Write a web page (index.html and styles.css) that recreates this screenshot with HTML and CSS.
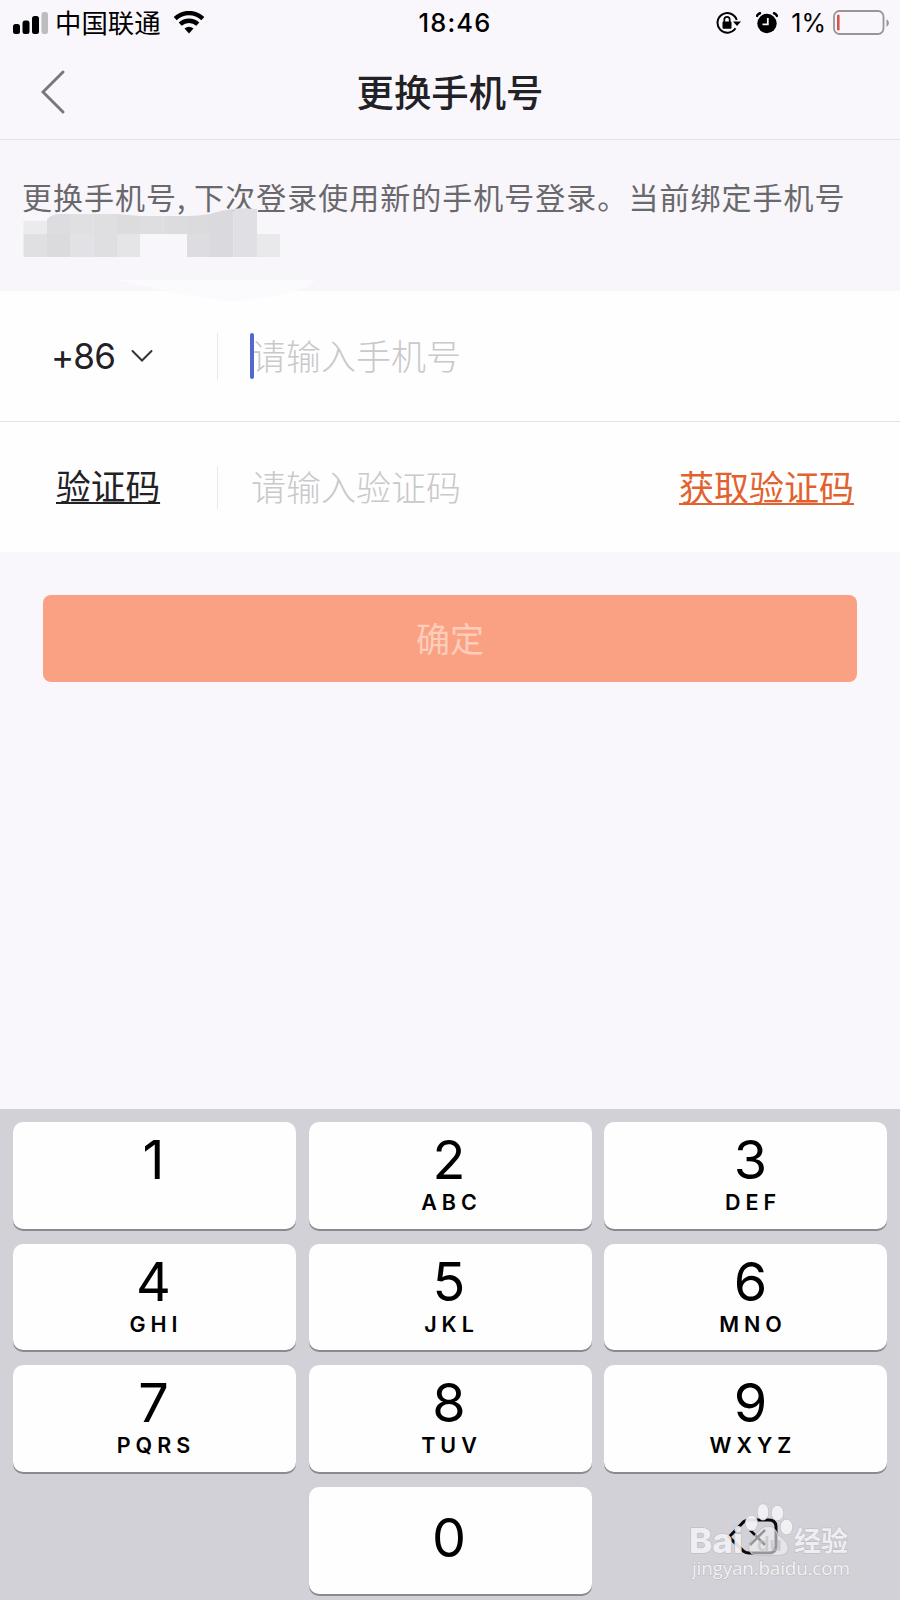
FILE: index.html
```html
<!DOCTYPE html>
<html lang="zh-CN">
<head>
    <meta charset="UTF-8">
    <title>更换手机号</title>
    <link rel="stylesheet" href="styles.css">
</head>
<body>
    <div class="screen">
        <div class="status-bar">
            <div class="status-left">
                <svg class="signal" width="36" height="22" viewBox="0 0 36 22">
                    <rect x="0" y="12" width="7" height="10" rx="2.5"/>
                    <rect x="9.5" y="8.5" width="7" height="13.5" rx="2.5"/>
                    <rect x="19" y="4" width="7" height="18" rx="2.5"/>
                    <rect x="28.5" y="0" width="6.5" height="22" rx="2.5" fill="#bdbcbf"/>
                </svg>
                <span class="carrier">中国联通</span>
                <svg class="wifi" width="32" height="23" viewBox="0 0 32 23">
                    <path d="M2.2 7.6C10 .2 22 .2 29.8 7.6M7.2 13.2C12.2 8.5 19.8 8.5 24.8 13.2" fill="none" stroke="#000" stroke-width="4.4"/>
                    <path d="M16 22.5L11.500 17.5Q16 13.8 20.5 17.5Z"/>
                </svg>
            </div>
            <span class="time">18:46</span>
            <div class="status-right">
                <svg class="lock" width="26" height="24" viewBox="0 0 26 24">
                    <path d="M19.5 17.3A9.800 9.800 0 1 1 20.7 9" fill="none" stroke="#000" stroke-width="2"/>
                    <path d="M17 10.5H25L21 15Z"/>
                    <rect x="6.5" y="10.5" width="9" height="7.2" rx="1"/>
                    <path d="M8.3 11V8.500a2.700 2.700 0 0 1 5.400 0V11" fill="none" stroke="#000" stroke-width="1.7"/>
                </svg>
                <svg class="alarm" width="22" height="22" viewBox="0 0 22 22">
                    <circle cx="11" cy="11.5" r="9.700"/>
                    <path d="M.5 5A6 6 0 0 1 5 .8M17 .8A6 6 0 0 1 21.500 5" fill="none" stroke="#000" stroke-width="2.4"/>
                    <path d="M11.8 6V12.300H6.500" fill="none" stroke="#f9f8fb" stroke-width="1.8"/>
                </svg>
                <span class="percent">1%</span>
                <svg class="battery" width="57" height="26" viewBox="0 0 57 26">
                    <rect x="1" y="1" width="49.5" height="23" rx="5.5" fill="none" stroke="#969598" stroke-width="1.8"/>
                    <rect x="4" y="4.5" width="2.6" height="16" rx="1.2" fill="#d9534c"/>
                    <path d="M53.5 9Q58.500 12.800 53.500 17Z" fill="#969598"/>
                </svg>
            </div>
        </div>

        <div class="nav">
            <svg class="back" width="24" height="44" viewBox="0 0 24 44">
                <path d="M22 2L2 22L22 42" fill="none" stroke="#77767a" stroke-width="2.9" stroke-linecap="round"/>
            </svg>
            <h1>更换手机号</h1>
        </div>

        <div class="notice">
            <p>更换手机号<span class="comma">,</span>下次登录使用新的手机号登录。当前绑定手机号</p>
            <!-- hidden phone number -->
            <svg class="mask" width="330" height="96" viewBox="0 0 330 96">
                <path d="M118 73H315L308 80Q260 95 226 94Q180 88 118 73Z" fill="#fbfafd"/>
                <path d="M23.5 14H47V27H23.500Z" fill="#ebeaed"/>
                <path d="M47 12Q52 7 60 7H70V27H47Z" fill="#dddce0"/>
                <path d="M70 7H93.500V27H70Z" fill="#e0dfe2"/>
                <path d="M93.5 7H117V27H93.500Z" fill="#dfdee1"/>
                <path d="M117 7L140 9V27H117Z" fill="#dcdbde"/>
                <path d="M140 9H163.500V27H140Z" fill="#dedde0"/>
                <path d="M163.5 9H187V27H163.500Z" fill="#dcdbde"/>
                <path d="M187 9Q198 9 210 7V27H187Z" fill="#dbdadd"/>
                <path d="M210 7Q222 3 233.500 2V50H210Z" fill="#dad9dd"/>
                <path d="M233.5 2Q240 .5 257 2V50H233.500Z" fill="#e0dfe3"/>
                <path d="M257 27H280V50H257Z" fill="#e9e8eb"/>
                <path d="M23.5 27H47V50H23.500Z" fill="#e0dfe2"/>
                <path d="M47 27H70V50H47Z" fill="#dbdadd"/>
                <path d="M70 27H93.500V50H70Z" fill="#e2e1e5"/>
                <path d="M93.5 27H117V50H93.500Z" fill="#dfdee1"/>
                <path d="M117 27H140V50H117Z" fill="#e5e4e7"/>
                <path d="M187 27H210V50H187Z" fill="#dddce0"/>
            </svg>
        </div>

        <div class="form">
            <div class="row">
                <div class="label area-code">+86
                    <svg width="22" height="14" viewBox="0 0 22 14">
                        <path d="M1.5 2L11 11.500L20.500 2" fill="none" stroke="#333236" stroke-width="2" stroke-linecap="round"/>
                    </svg>
                </div>
                <div class="divider tall"></div>
                <div class="field"><i class="caret"></i>请输入手机号</div>
            </div>
            <div class="row">
                <div class="label"><u>验证码</u></div>
                <div class="divider"></div>
                <div class="field">请输入验证码</div>
                <a class="get-code">获取验证码</a>
            </div>
        </div>

        <button class="submit">确定</button>

        <div class="keyboard">
            <div class="key"><b>1</b></div>
            <div class="key"><b>2</b><span>ABC</span></div>
            <div class="key right"><b>3</b><span>DEF</span></div>
            <div class="key"><b>4</b><span>GHI</span></div>
            <div class="key"><b>5</b><span>JKL</span></div>
            <div class="key right"><b>6</b><span>MNO</span></div>
            <div class="key"><b>7</b><span>PQRS</span></div>
            <div class="key"><b>8</b><span>TUV</span></div>
            <div class="key right"><b>9</b><span>WXYZ</span></div>
            <div class="blank"></div>
            <div class="key zero"><b>0</b></div>
            <div class="blank delete">
                <svg width="52" height="40" viewBox="0 0 52 40">
                    <path d="M2 20L17 4.500Q19 3 22 3H42Q49 3 49 10V29Q49 36 42 36H22Q19 36 17 34.500Z" fill="none" stroke="#0a0a0c" stroke-width="3"/>
                    <path d="M23 13L38 28M38 13L23 28" fill="none" stroke="#0a0a0c" stroke-width="2.6"/>
                </svg>
            </div>
        </div>

        <!-- watermark -->
        <div class="watermark">
            <svg width="170" height="90" viewBox="0 0 170 90">
                <g class="wm-fill">
                    <ellipse cx="83" cy="22" rx="5.5" ry="8"/>
                    <ellipse cx="97.5" cy="23" rx="6" ry="7.5"/>
                    <ellipse cx="71.5" cy="33" rx="6" ry="7.5"/>
                    <ellipse cx="106.5" cy="37" rx="6" ry="7.5"/>
                    <path class="wm-pad" d="M80 40Q85 35 92 37Q96 39 98 45Q108 52 108 58Q107 65 100 65H77Q69 65 69 57Q70 50 80 40Z"/>
                </g>
                <text class="wm-logo" x="9" y="63" textLength="54" lengthAdjust="spacingAndGlyphs">Bai</text>
                <text class="wm-du" x="77" y="61">du</text>
                <text class="wm-cn" x="114" y="61">经验</text>
                <text class="wm-url" x="12" y="85" textLength="158">jingyan.baidu.com</text>
            </svg>
        </div>
    </div>
</body>
</html>
```
FILE: styles.css
```css
* {
    box-sizing: border-box;
}

body {
    margin: 0;
    font-family: Inter, "Noto Sans CJK SC", sans-serif;
    background-color: #f9f7fb;
    color: #222126;
}

.screen {
    position: relative;
    display: flex;
    flex-direction: column;
    width: 900px;
    height: 1600px;
    overflow: hidden;
}

/* Status bar */
.status-bar {
    display: grid;
    grid-template-columns: 1fr auto 1fr;
    align-items: center;
    height: 45px;
    padding: 0 10px 0 13px;
    color: #000;
}

.status-left,
.status-right {
    display: flex;
    align-items: center;
}

.status-right {
    justify-content: flex-end;
}

.carrier {
    margin: 0 12px 0 6px;
    font-family: "Noto Sans CJK SC", sans-serif;
    font-size: 26.4px;
    line-height: 43px;
    padding-bottom: 2px;
}

.time {
    margin-left: 7px;
    font-size: 25.5px;
    font-weight: 500;
    letter-spacing: 1.2px;
}

.alarm {
    margin: 0 13px 0 14px;
}

.percent {
    margin-right: 7px;
    font-size: 25px;
}

/* Header */
.nav {
    display: grid;
    grid-template-columns: 1fr auto 1fr;
    align-items: center;
    height: 95px;
    padding: 0 41px;
    border-bottom: 1px solid #e2e1e4;
}

h1 {
    margin: 0;
    font-family: "Noto Sans CJK SC", sans-serif;
    font-size: 37.4px;
    font-weight: 500;
    line-height: 92px;
    padding-bottom: 2px;
}

.notice {
    position: relative;
    height: 151px;
    padding: 33px 0 0 22px;
    background-color: #f8f6fa;
    color: #69686c;
}

.notice p {
    margin: 0;
    font-family: "Noto Sans CJK SC", sans-serif;
    font-size: 30px;
    letter-spacing: 1.02px;
    line-height: 46px;
    white-space: nowrap;
}

.comma {
    display: inline-block;
    width: 17px;
}

.mask {
    position: absolute;
    left: 0;
    top: 67px;
    z-index: 1;
}

/* Form */
.form {
    background-color: #fefefe;
    font-family: "Noto Sans CJK SC", sans-serif;
    font-size: 35px;
}

.row {
    display: flex;
    align-items: center;
    height: 130px;
    padding-right: 46px;
}

.row:first-child {
    height: 131px;
    border-bottom: 1px solid #e3e2e5;
}

.label {
    width: 217px;
    padding-left: 56px;
    padding-bottom: 4px;
    font-size: 34.7px;
}

.get-code {
    padding-bottom: 4px;
    color: #e2622f;
}

.label u,
.get-code {
    text-decoration: underline;
    text-decoration-thickness: 2px;
    text-decoration-skip-ink: none;
    text-underline-offset: 2px;
}

.area-code {
    display: flex;
    align-items: center;
    gap: 16px;
    padding-left: 51px;
    padding-bottom: 0;
    font-family: Inter, sans-serif;
    font-size: 35px;
    letter-spacing: -0.8px;
}

.divider {
    width: 1px;
    height: 43px;
    margin-right: 33px;
    background-color: #e9e8eb;
}

.divider.tall {
    height: 47px;
}

.field {
    position: relative;
    flex: 1;
    padding-bottom: 4px;
    color: #c9c8cb;
    font-weight: 300;
}

.caret {
    position: absolute;
    left: -1px;
    top: 4px;
    width: 4px;
    height: 46px;
    border-radius: 2px;
    background-color: #5068cf;
}

.submit {
    height: 87px;
    margin: 43px 43px 0 43px;
    padding: 0 0 2px;
    border: none;
    border-radius: 8px;
    background-color: #faa183;
    color: #fccdbb;
    font-family: "Noto Sans CJK SC", sans-serif;
    font-size: 34px;
    font-weight: 400;
}

/* Number pad */
.keyboard {
    display: grid;
    grid-template-columns: repeat(3, 1fr);
    grid-auto-rows: 106.5px;
    gap: 15.2px 12.5px;
    height: 491px;
    margin-top: auto;
    padding: 13px;
    background-color: #d2d1d7;
    color: #000;
}

.key {
    display: flex;
    flex-direction: column;
    align-items: center;
    padding-top: 10px;
    padding-right: 2px;
    border-radius: 10px;
    background-color: #fefefe;
    box-shadow: 0 2px 0 #8b8b8f;
}

.key b {
    font-size: 54px;
    font-weight: 400;
    line-height: 56px;
}

.key span {
    padding-left: 5px;
    font-size: 21.5px;
    font-weight: 600;
    letter-spacing: 5px;
    line-height: 29px;
}

.key.right {
    padding-left: 12px;
}

.key.zero {
    justify-content: center;
    padding-top: 0;
    padding-bottom: 4px;
}

.delete {
    display: flex;
    align-items: center;
    justify-content: center;
    padding-left: 14px;
    padding-bottom: 6px;
}

/* Watermark */
.watermark {
    position: absolute;
    left: 680px;
    top: 1490px;
}

.wm-fill,
.wm-logo,
.wm-cn {
    fill: #f3f2f5;
    fill-opacity: 0.93;
    stroke: #b9b8bd;
    stroke-width: 1;
    paint-order: stroke;
}

.wm-fill .wm-pad {
    fill-opacity: 0.6;
}

.wm-logo {
    font-family: Inter, sans-serif;
    font-size: 34px;
    font-weight: 800;
}

.wm-du {
    fill: #bab9be;
    fill-opacity: 0.6;
    font-family: Inter, sans-serif;
    font-size: 20px;
    font-weight: 600;
}

.wm-cn {
    font-family: "Noto Sans CJK SC", sans-serif;
    font-size: 27px;
    font-weight: 700;
}

.wm-url {
    fill: #f3f2f5;
    stroke: #b9b8bd;
    stroke-width: 1;
    paint-order: stroke;
    font-family: "Open Sans", sans-serif;
    font-size: 19px;
}
```
